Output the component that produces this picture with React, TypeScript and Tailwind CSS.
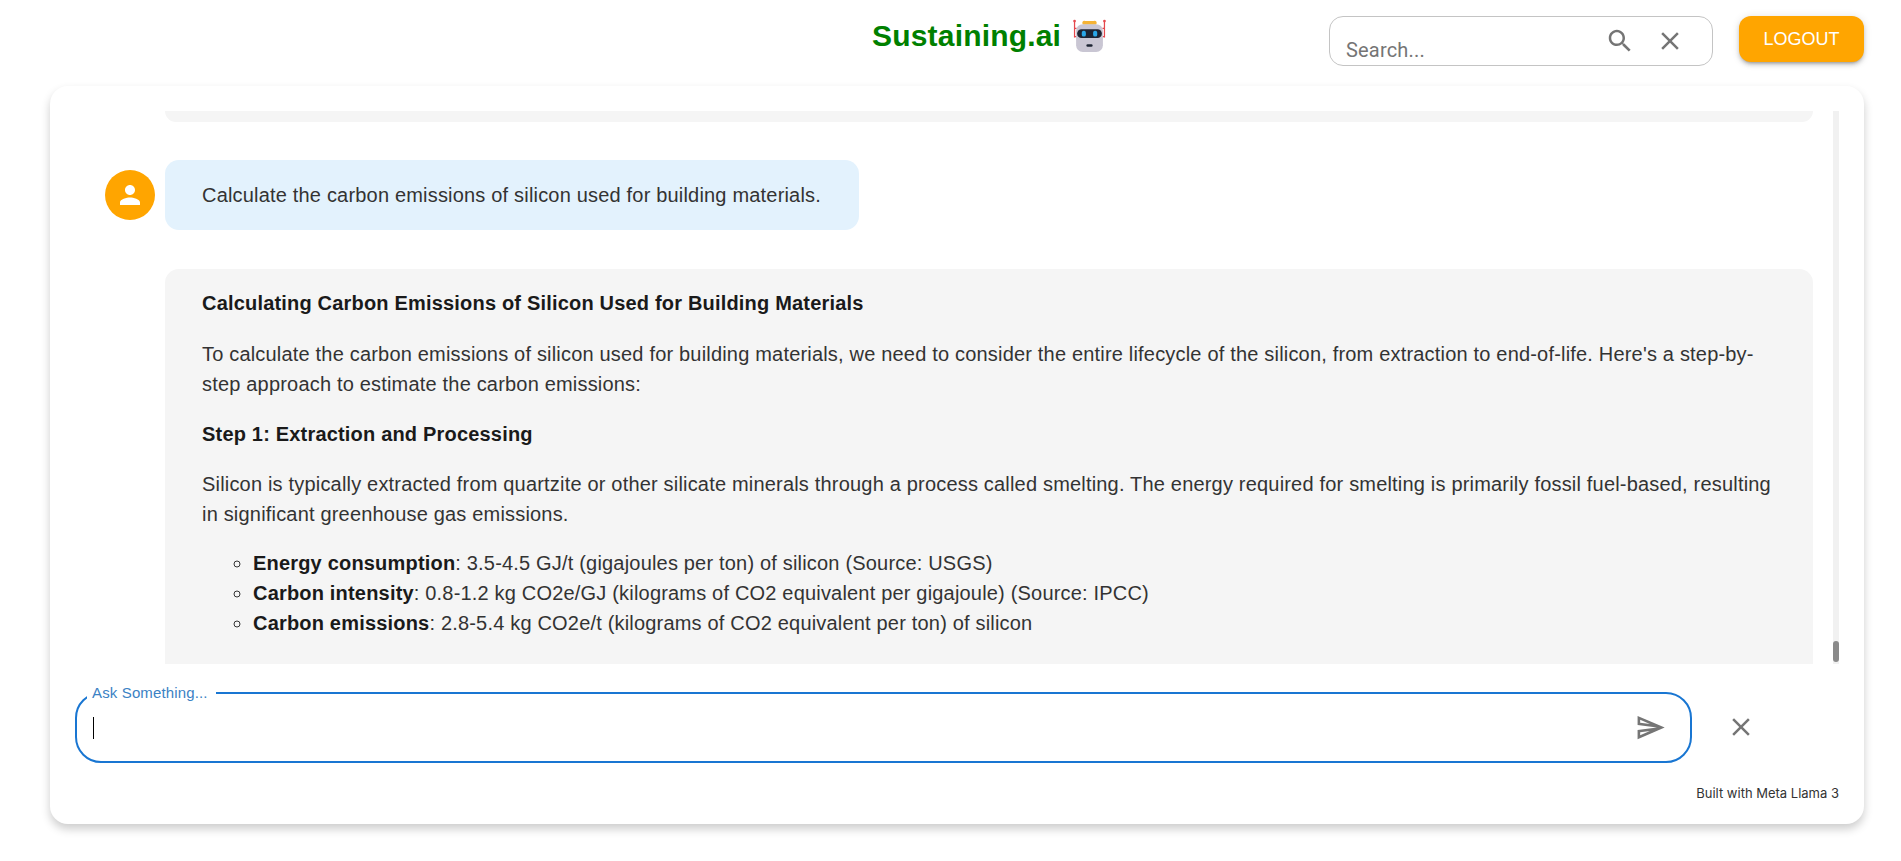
import React from "react";

const searchPath =
  "M15.5 14h-.79l-.28-.27C15.41 12.59 16 11.11 16 9.5 16 5.91 13.09 3 9.5 3S3 5.91 3 9.5 5.91 16 9.5 16c1.61 0 3.09-.59 4.23-1.57l.27.28v.79l5 4.99L20.49 19l-4.99-5zm-6 0C7.01 14 5 11.99 5 9.5S7.01 5 9.5 5 14 7.01 14 9.5 11.99 14 9.5 14z";
const closePath =
  "M19 6.41L17.59 5 12 10.59 6.41 5 5 6.41 10.59 12 5 17.59 6.41 19 12 13.41 17.59 19 19 17.59 13.41 12z";
const sendPath =
  "M4.01 6.03l7.51 3.22-7.52-1 .01-2.22m7.5 8.72L4 17.97v-2.22l7.51-1M2.01 3L2 10l15 2-15 2 .01 7L23 12 2.01 3z";
const personPath =
  "M12 12c2.21 0 4-1.79 4-4s-1.79-4-4-4-4 1.79-4 4 1.79 4 4 4zm0 2c-2.67 0-8 1.34-8 4v2h16v-2c0-2.66-5.33-4-8-4z";

const Icon = ({ d, className }: { d: string; className: string }) => (
  <svg viewBox="0 0 24 24" className={className} fill="currentColor">
    <path d={d} />
  </svg>
);

// robot emoji next to the title
const RobotLogo = () => (
  <svg viewBox="0 0 32 32" className="w-[33px] h-[33px] shrink-0">
    <path d="M10 5.5a2 2 0 0 1 2-3.5h8a2 2 0 0 1 2 3.5z" fill="#f5b335" />
    <path d="M1.5 2v16M30.5 2v16" stroke="#e5484d" strokeWidth="1.2" />
    <circle cx="1.5" cy="2" r="1.3" fill="#e5484d" />
    <circle cx="30.5" cy="2" r="1.3" fill="#e5484d" />
    <path d="M1.5 9h2M1.5 17h2M28.5 9h2M28.5 17h2" stroke="#e5484d" strokeWidth="1.2" />
    <rect x="3" y="5" width="26" height="27" rx="6.5" fill="#c9c6d3" />
    <rect x="4" y="10" width="24" height="8.5" rx="4.25" fill="#1d2433" />
    <rect x="8.5" y="11.5" width="4" height="5.5" rx="1.8" fill="#29a7e8" />
    <rect x="19.5" y="11.5" width="4" height="5.5" rx="1.8" fill="#29a7e8" />
    <rect x="13" y="24.5" width="6" height="2.5" rx="1.2" fill="#1d2433" />
  </svg>
);

const Header = () => (
  <header className="h-[86px] flex items-start">
    <div className="ml-[872px] mt-[15px] flex items-center w-[457px]">
      <h1 className="text-[30px] leading-[42px] font-bold text-[#008000]">
        Sustaining.ai
      </h1>
      <span className="ml-[12px] -mt-[1px]">
        <RobotLogo />
      </span>
    </div>
    <div className="mt-[16px] w-[384px] h-[50px] border border-[#c4c4c4] rounded-[14px] flex items-start pl-[16px] font-['Roboto',sans-serif]">
      <div className="flex-1 pt-[18px] text-[20px] leading-[30px] text-[#757575]">
        Search...
      </div>
      <Icon d={searchPath} className="w-[30px] h-[30px] text-[#757575] mt-[9px]" />
      <Icon d={closePath} className="w-[30px] h-[30px] text-[#757575] mt-[9px] ml-[20px] mr-[27px]" />
    </div>
    <button className="mt-[16px] ml-[26px] w-[125px] h-[46px] pb-[1px] bg-[#ffa500] rounded-[12px] text-white text-[18px] tracking-normal shadow-[0_3px_3px_-2px_rgba(0,0,0,0.25),0_3px_4px_0_rgba(0,0,0,0.14),0_1px_8px_0_rgba(0,0,0,0.12)]">
      LOGOUT
    </button>
  </header>
);

const Messages = () => (
  <div className="flex h-[553px]">
    <div className="flex-1 overflow-hidden pl-[55px]">
      <div className="ml-[60px] w-[1648px] h-[11px] bg-[#f5f5f5] rounded-b-[14px]" />
      <div className="flex items-center mt-[38px]">
        <div className="w-[50px] h-[50px] rounded-full bg-[#ffa500] flex items-center justify-center">
          <Icon d={personPath} className="w-[30px] h-[30px] text-white" />
        </div>
        <div className="ml-[10px] h-[70px] pl-[37px] pr-[38px] flex items-center bg-[#e3f2fd] rounded-[14px] text-[#333]">
          Calculate the carbon emissions of silicon used for building materials.
        </div>
      </div>
      <div className="ml-[60px] w-[1648px] mt-[39px] bg-[#f5f5f5] rounded-t-[14px] pt-[19px] pb-[40px] pl-[37px] pr-[38px] text-[#333]">
        <p className="font-bold text-[#1a1a1a]">
          Calculating Carbon Emissions of Silicon Used for Building Materials
        </p>
        <p className="mt-[21px]">
          To calculate the carbon emissions of silicon used for building
          materials, we need to consider the entire lifecycle of the silicon,
          from extraction to end-of-life. Here's a step-by-step approach to
          estimate the carbon emissions:
        </p>
        <p className="mt-[20px] font-bold text-[#1a1a1a]">
          Step 1: Extraction and Processing
        </p>
        <p className="mt-[20px]">
          Silicon is typically extracted from quartzite or other silicate
          minerals through a process called smelting. The energy required for
          smelting is primarily fossil fuel-based, resulting in significant
          greenhouse gas emissions.
        </p>
        <ul className="mt-[19px] pl-[51px] list-[circle]">
          <li>
            <b className="text-[#1a1a1a]">Energy consumption</b>: 3.5-4.5 GJ/t
            (gigajoules per ton) of silicon (Source: USGS)
          </li>
          <li>
            <b className="text-[#1a1a1a]">Carbon intensity</b>: 0.8-1.2 kg
            CO2e/GJ (kilograms of CO2 equivalent per gigajoule) (Source: IPCC)
          </li>
          <li>
            <b className="text-[#1a1a1a]">Carbon emissions</b>: 2.8-5.4 kg
            CO2e/t (kilograms of CO2 equivalent per ton) of silicon
          </li>
        </ul>
      </div>
    </div>
    <div className="w-[6px] mr-[25px] bg-[#f1f1f1] flex flex-col justify-end pb-[2px]">
      <div className="h-[21px] rounded-full bg-[#8a8a8a]" />
    </div>
  </div>
);

const AskBox = () => (
  <div className="flex items-center mt-[27px] ml-[25px]">
    <fieldset className="relative w-[1617px] h-[78px] -mt-[6px] border-2 border-[#1976d2] rounded-[26px] pl-[10px] pr-[24px] flex items-center">
      <legend className="pl-[5px] pr-[8px] text-[15px] leading-[15px] tracking-[0.00938em] text-[#3b82c4]">
        Ask Something...
      </legend>
      <div className="w-px h-[22px] bg-black ml-[6px] -mt-[6px]" />
      <div className="flex-1" />
      <Icon d={sendPath} className="w-[31px] h-[31px] text-[#757575] -mt-[6px]" />
    </fieldset>
    <Icon d={closePath} className="w-[30px] h-[30px] text-[#757575] ml-[34px]" />
  </div>
);

export default function App() {
  return (
    <div className="w-[1901px] h-[861px] bg-white overflow-hidden font-['Liberation_Sans',Arial,sans-serif] text-[20px] tracking-[0.00938em] leading-[30px]">
      <Header />
      <main className="ml-[50px] w-[1814px] h-[738px] bg-white rounded-[18px] pt-[25px] shadow-[0_5px_10px_rgba(0,0,0,0.2)]">
        <Messages />
        <AskBox />
        <p className="mt-[22px] mr-[25px] text-right text-[13px] leading-[16px] tracking-normal text-[#333] font-['Inter',sans-serif]">
          Built with Meta Llama 3
        </p>
      </main>
    </div>
  );
}
